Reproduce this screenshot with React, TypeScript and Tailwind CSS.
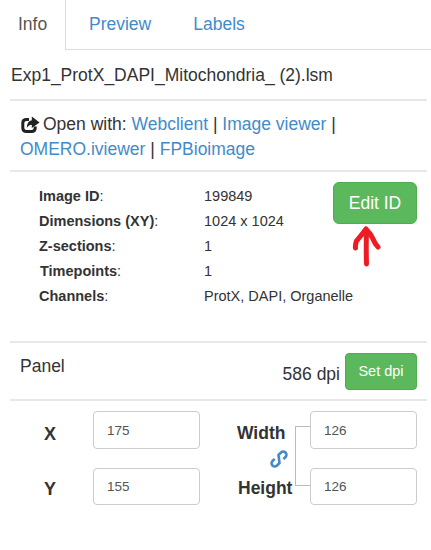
export default function App() {
  const rows = [
    ["Image ID", "199849", "ml-0"],
    ["Dimensions (XY)", "1024 x 1024", "ml-0"],
    ["Z-sections", "1", "ml-0"],
    ["Timepoints", "1", "ml-px"],
    ["Channels", "ProtX, DAPI, Organelle", "ml-0"],
  ];
  return (
    <div className="w-[431px] h-[550px] bg-white text-[#333] font-['Liberation_Sans',Arial,sans-serif] overflow-hidden">
      <div className="flex h-[50px] border-b border-[#ddd] text-[17.5px]">
        <div className="w-[66px] h-[50px] border-r border-[#ddd] bg-white pl-[18px] pt-[12px] leading-[25px] text-[#555]">Info</div>
        <div className="pl-[23px] pt-[12px] leading-[25px] text-[#428bca]">Preview</div>
        <div className="pl-[42px] pt-[12px] leading-[25px] text-[#428bca]">Labels</div>
      </div>
      <div className="ml-[10px] w-[417px]">
        <div className="h-[51px] border-b-2 border-[#e8e8e8] pl-px pt-[13px] text-[17.5px] leading-[25px] whitespace-nowrap">
          Exp1_ProtX_DAPI_Mitochondria_ (2).lsm
        </div>
        <div className="h-[71px] border-b-2 border-[#e8e8e8] pl-[10px] pt-[11px] text-[17.5px] leading-[25px]">
          <div className="whitespace-nowrap flex items-center">
            <svg width="19" height="18" viewBox="0 0 19 18" className="mr-[3px] ml-px shrink-0">
              <path d="M8 3.4H5.5Q1.8 3.4 1.8 7V12Q1.8 15.6 5.5 15.6H10.5Q14.2 15.6 14.2 12V10.5" fill="none" stroke="#222" strokeWidth="3" />
              <path d="M10.8 0.6L18.6 6.4L10.8 12V8.8Q7.6 8.8 5.8 11.8Q6 5 10.8 4.2Z" fill="#222" />
            </svg>
            <span>Open with: <span className="text-[#428bca]">Webclient</span> | <span className="text-[#428bca]">Image viewer</span> |</span>
          </div>
          <div className="whitespace-nowrap">
            <span className="text-[#428bca]">OMERO.iviewer</span> | <span className="text-[#428bca]">FPBioimage</span>
          </div>
        </div>
        <div className="h-[171px] border-b-2 border-[#e8e8e8] flex justify-between pr-[10px]">
          <div className="w-[323px] shrink-0 pl-[29px] pt-[12px] text-[14.5px]">
            {rows.map(([label, value, offset]) => (
              <div key={label} className="flex h-[25px] items-center">
                <div className="w-[165px] shrink-0">
                  <div className={offset}><b>{label}</b>:</div>
                </div>
                <div className="whitespace-nowrap">{value}</div>
              </div>
            ))}
          </div>
          <div className="pt-[10px] flex flex-col items-center w-[84px] shrink-0">
            <div className="w-[84px] h-[42px] shrink-0 rounded-[6px] bg-[#5cb85c] border border-[#4cae4c] text-white text-[17.5px] leading-[40px] text-center">Edit ID</div>
            <svg width="30" height="44" viewBox="0 0 30 44" className="mr-[18px] shrink-0">
              <path d="M15.5 40Q15 24 15.5 6M15 5Q9 13 5.5 17Q4 21 4.5 24M15 5Q20 10 22 15Q24 20 27 23" fill="none" stroke="#ed1c24" strokeWidth="5" strokeLinecap="round" strokeLinejoin="round" />
            </svg>
          </div>
        </div>
        <div className="h-[58px] border-b-2 border-[#e8e8e8] flex justify-between pr-[10px]">
          <div className="pt-[11px] pl-[10px] text-[17.5px] leading-[25px]">Panel</div>
          <div className="flex pt-[10px] items-start">
            <div className="text-[17.5px] leading-[25px] pt-[9px] mr-[5px]">586 dpi</div>
            <div className="w-[72px] h-[37px] rounded-[4px] bg-[#5cb85c] border border-[#4cae4c] text-white text-[14.5px] leading-[35px] text-center">Set dpi</div>
          </div>
        </div>
        <div className="flex justify-between pt-[10px] pr-[10px]">
          <div className="flex">
            <div className="w-[83px] text-[18px] font-bold leading-[25px]">
              <div className="h-[57px] pl-[34px] pt-[11px]">X</div>
              <div className="pl-[34px] pt-[9px]">Y</div>
            </div>
            <div className="flex flex-col gap-[19px]">
              <div className="w-[107px] h-[38px] border border-[#ccc] rounded-[4px] pl-[13px] text-[13.5px] leading-[37px] text-[#555]">175</div>
              <div className="w-[107px] h-[37px] border border-[#ccc] rounded-[4px] pl-[13px] text-[13.5px] leading-[35px] text-[#555]">155</div>
            </div>
          </div>
          <div className="flex relative">
            <div className="w-[73px] text-[17.5px] font-bold leading-[25px] whitespace-nowrap">
              <div className="h-[35px] pt-[10px]">Width</div>
              <div className="h-[30px] pt-[4px] pl-[33px]">
                <svg width="18" height="18" viewBox="0 0 18 18" className="overflow-visible">
                  <g fill="none" stroke="#428bca" strokeWidth="2.6" transform="rotate(-45 9 9)">
                    <path d="M12 12.2H15a3.2 3.2 0 0 0 0 -6.4H11.5L6.5 12.2H3a3.2 3.2 0 0 1 0 -6.4H6" />
                  </g>
                </svg>
              </div>
              <div className="pl-px">Height</div>
            </div>
            <div className="absolute left-[58px] top-[15px] w-[15px] h-[60px] border-l border-t border-b border-[#bbb]" />
            <div className="flex flex-col gap-[19px]">
              <div className="w-[107px] h-[38px] border border-[#ccc] rounded-[4px] pl-[13px] text-[13.5px] leading-[37px] text-[#555] bg-white">126</div>
              <div className="w-[107px] h-[37px] border border-[#ccc] rounded-[4px] pl-[13px] text-[13.5px] leading-[35px] text-[#555] bg-white">126</div>
            </div>
          </div>
        </div>
      </div>
    </div>
  );
}
